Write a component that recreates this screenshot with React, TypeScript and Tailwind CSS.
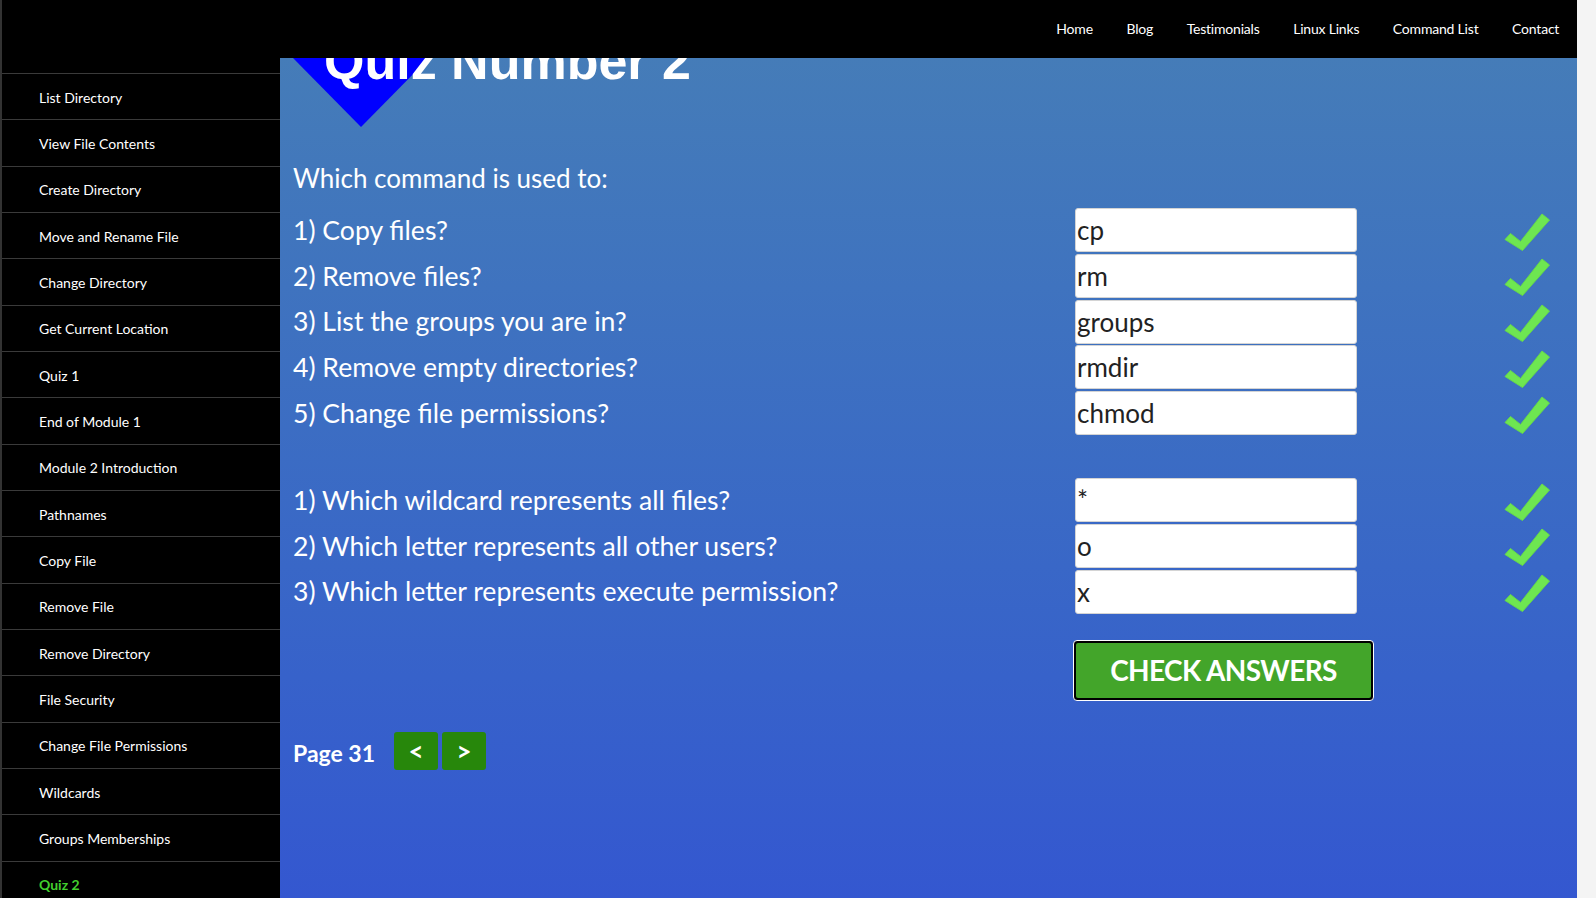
// Quiz page: fixed black top nav, black lesson sidebar, blue gradient quiz panel
const navLinks = ["Home", "Blog", "Testimonials", "Linux Links", "Command List", "Contact"]

const lessons = [
  "List Directory",
  "View File Contents",
  "Create Directory",
  "Move and Rename File",
  "Change Directory",
  "Get Current Location",
  "Quiz 1",
  "End of Module 1",
  "Module 2 Introduction",
  "Pathnames",
  "Copy File",
  "Remove File",
  "Remove Directory",
  "File Security",
  "Change File Permissions",
  "Wildcards",
  "Groups Memberships",
  "Quiz 2",
]

const commandQuestions = [
  { q: "1) Copy files?", a: "cp" },
  { q: "2) Remove files?", a: "rm" },
  { q: "3) List the groups you are in?", a: "groups" },
  { q: "4) Remove empty directories?", a: "rmdir" },
  { q: "5) Change file permissions?", a: "chmod" },
]

const wildcardQuestions = [
  { q: "1) Which wildcard represents all files?", a: "*" },
  { q: "2) Which letter represents all other users?", a: "o" },
  { q: "3) Which letter represents execute permission?", a: "x" },
]

// Brush-style green tick shown next to a correct answer
function Tick() {
  return (
    <svg width="46" height="38" viewBox="0 0 46 38" className="block">
      <path
        d="M1 26.5 L6.5 20.5 L16.5 28.5 L38 1 L45.5 7 L18.5 37.5 Z"
        fill="#6ee651"
        stroke="#66d84a"
        strokeWidth="1"
        strokeLinejoin="round"
      />
    </svg>
  )
}

function QuestionRow({ q, a }: { q: string; a: string }) {
  return (
    <div className="grid grid-cols-[782px_282px_1fr] h-[44px] items-center">
      <div className="text-[26.6px] text-white leading-none">{q}</div>
      <input
        readOnly
        value={a}
        className="h-[44px] w-[282px] bg-white border border-[#d4d4d4] rounded-[3px] pl-[1px] text-[26px] text-[#222] outline-none font-[Lato,sans-serif]"
      />
      <div className="flex justify-end pr-[27px] pt-[3px]">
        <Tick />
      </div>
    </div>
  )
}

export default function App() {
  return (
    <div className="flex w-full h-[898px] overflow-hidden bg-[#f4f4f4] font-[Lato,sans-serif]">
      <div className="flex flex-col w-[1577px] h-full">
        {/* Top navigation */}
        <header className="h-[58px] shrink-0 bg-black flex items-center justify-end pr-[1px] border-l-2 border-[#333]">
          <nav className="flex">
            {navLinks.map((l) => (
              <a key={l} className="px-[16.8px] text-[14px] text-white leading-none tracking-[-0.2px]">
                {l}
              </a>
            ))}
          </nav>
        </header>

        <div className="flex flex-1 min-h-0">
          {/* Lesson sidebar */}
          <aside className="w-[280px] shrink-0 bg-black border-l-2 border-[#333] pt-[15px] overflow-hidden">
            <ul className="border-t border-[#3a3a3a]">
              {lessons.map((l) => (
                <li
                  key={l}
                  className={`h-[46.34px] border-b border-[#3a3a3a] flex items-center pl-[37px] pt-[1px] text-[14px] ${
                    l === "Quiz 2" ? "text-[#42cf2e] font-bold" : "text-white"
                  }`}
                >
                  {l}
                </li>
              ))}
            </ul>
          </aside>

          {/* Quiz panel */}
          <main className="flex-1 bg-linear-to-b from-[#457cb8] to-[#3457d0] pl-[13px] flex flex-col overflow-hidden">
            <div className="relative h-[98px] shrink-0 overflow-hidden">
              <div className="absolute left-0 top-0 w-0 h-0 border-l-[68px] border-r-[68px] border-t-[69px] border-l-transparent border-r-transparent border-t-[#0000ff]" />
              <h1 className="absolute left-[31px] top-[-23px] text-[52px] leading-none font-bold text-white font-['Liberation_Sans',Arial,sans-serif] whitespace-nowrap">
                Quiz Number 2
              </h1>
            </div>

            <p className="text-[26px] text-white leading-[44px] mb-[8px]">Which command is used to:</p>

            <div className="flex flex-col gap-[1.8px]">
              {commandQuestions.map((r) => (
                <QuestionRow key={r.q} {...r} />
              ))}
            </div>

            <div className="flex flex-col gap-[1.8px] mt-[43px]">
              {wildcardQuestions.map((r) => (
                <QuestionRow key={r.q} {...r} />
              ))}
            </div>

            <div className="pl-[780px] mt-[26px]">
              <button className="w-[301px] h-[61px] rounded-[4px] border border-white bg-black p-[2px]">
                <span className="flex items-center justify-center w-full h-full rounded-[2px] bg-[#43a52a] text-white text-[28px] font-bold tracking-[-0.6px]">
                  CHECK ANSWERS
                </span>
              </button>
            </div>

            <div className="flex items-center mt-[31px]">
              <span className="text-white text-[23px] font-bold mr-[19px] pt-[4px]">Page 31</span>
              <div className="flex gap-[4px]">
                <button className="w-[44px] h-[38px] rounded-[3px] bg-[#27870b] text-white text-[26px] font-bold leading-none">
                  &lt;
                </button>
                <button className="w-[44px] h-[38px] rounded-[3px] bg-[#27870b] text-white text-[26px] font-bold leading-none">
                  &gt;
                </button>
              </div>
            </div>
          </main>
        </div>
      </div>
      <div className="w-[19px] shrink-0 bg-[#f4f4f4]" />
    </div>
  )
}
